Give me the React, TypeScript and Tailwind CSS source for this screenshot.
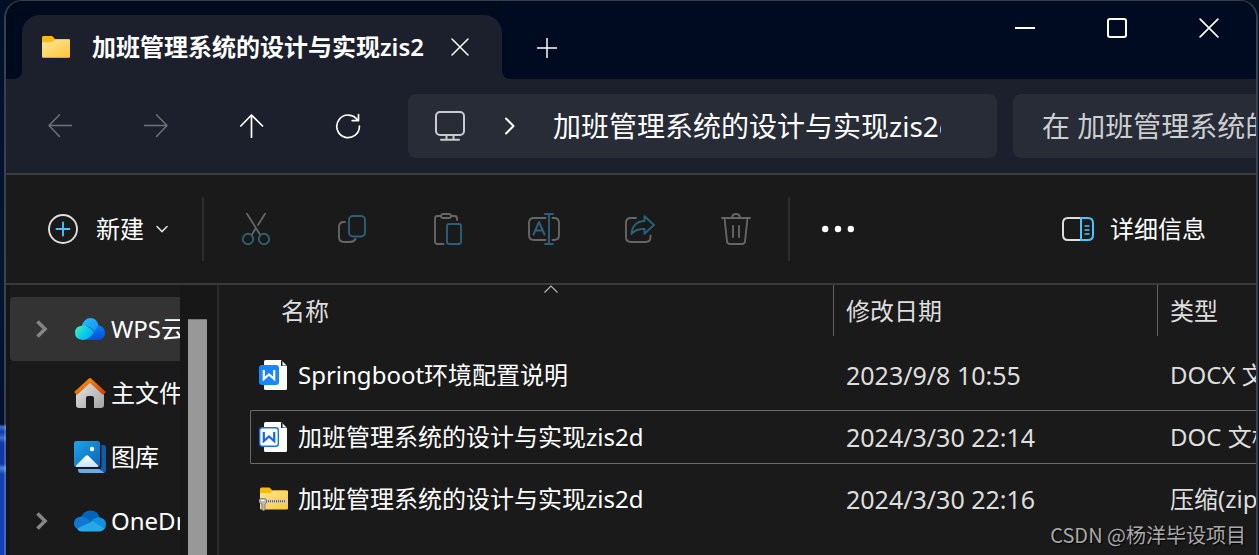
import React from 'react';

interface IconProps {
  className?: string;
}

interface FileItem {
  name: string;
  modified: string;
  type: string;
  icon: React.FC<IconProps>;
  focused?: boolean;
}

interface SidebarItem {
  title: string;
  icon: React.FC<IconProps>;
  expandable?: boolean;
  active?: boolean;
}

/* ---------- title bar and navigation icons ---------- */

const FolderIcon: React.FC<IconProps> = () => (
  <svg width="28" height="22" viewBox="0 0 28 22" fill="none" className="shrink-0">
    <defs>
      <linearGradient id="folder" x1="0" y1="0" x2="1" y2="1">
        <stop offset="0" stopColor="#ffe599" />
        <stop offset="1" stopColor="#ffc73a" />
      </linearGradient>
    </defs>
    <path d="M0 1.5Q0 0 1.5 0H9.5Q10.5 0 11.2 1L13 3H26.5Q28 3 28 4.500V21H0Z" fill="#fdb913" />
    <path d="M0 7Q0 6 1 6H10L13.500 3.500H27Q28 3.500 28 4.500V20.500Q28 22 26.500 22H1.500Q0 22 0 20.500Z" fill="#e8a21c" />
    <path d="M0 7Q0 6 1 6H10L13.500 3.500H27Q28 3.500 28 4.500V20Q28 21 27 21H1Q0 21 0 20Z" fill="url(#folder)" />
  </svg>
);

const CloseIcon = ({ size = 18 }: { size?: number }) => (
  <svg width={size} height={size} viewBox="0 0 18 18" stroke="currentColor" strokeWidth="1.5" strokeLinecap="round">
    <path d="M1 1L17 17M17 1L1 17" />
  </svg>
);

const PlusIcon = () => (
  <svg width="20" height="20" viewBox="0 0 20 20" stroke="currentColor" strokeWidth="1.5">
    <path d="M10 0V20M0 10H20" />
  </svg>
);

const BackIcon = () => (
  <svg width="24" height="24" viewBox="0 0 24 24" fill="none" stroke="currentColor" strokeWidth="1.6" strokeLinecap="round" strokeLinejoin="round">
    <path d="M23.500 11.500H1M11.500 .8L1 11.500L11.500 22.500" />
  </svg>
);

const ForwardIcon = () => (
  <svg width="24" height="24" viewBox="0 0 24 24" fill="none" stroke="currentColor" strokeWidth="1.6" strokeLinecap="round" strokeLinejoin="round">
    <path d="M.5 11.500H23M12.500 .8L23 11.500L12.500 22.500" />
  </svg>
);

const UpIcon = () => (
  <svg width="24" height="24" viewBox="0 0 24 24" fill="none" stroke="currentColor" strokeWidth="1.7" strokeLinecap="round" strokeLinejoin="round">
    <path d="M11.500 23.500V1M.8 12L11.500 1L22.500 12" />
  </svg>
);

const RefreshIcon = () => (
  <svg width="26" height="26" viewBox="0 0 26 26" fill="none" stroke="currentColor" strokeWidth="1.7" strokeLinecap="round" strokeLinejoin="round">
    <path d="M24.400 13A11.300 11.300 0 1 1 22.600 7.200M23.500 1.500V7.600H17.200" />
  </svg>
);

const MonitorIcon = () => (
  <svg width="30" height="30" viewBox="0 0 30 30" fill="none" stroke="#c9cbd0" strokeWidth="2">
    <rect x="1" y="1" width="28" height="23" rx="4" />
    <path d="M11.500 24.500V28M18.500 24.500V28" />
    <path d="M6 28.800H24" strokeLinecap="round" />
  </svg>
);

const CrumbIcon = () => (
  <svg width="10" height="18" viewBox="0 0 10 18" fill="none" stroke="currentColor" strokeWidth="2" strokeLinecap="round" strokeLinejoin="round">
    <path d="M1 1.500L8.500 9L1 16.500" />
  </svg>
);

/* ---------- command bar icons ---------- */

const CutIcon = () => (
  <svg width="28" height="32" viewBox="0 0 28 32" fill="none" strokeWidth="1.8" strokeLinecap="round">
    <path d="M5 .8L18 21.500M23 .8L16 12M13.600 15.500L10 21.500" stroke="#666" />
    <circle cx="6" cy="26" r="5.200" stroke="#2b5f7a" strokeWidth="1.9" />
    <circle cx="22" cy="26" r="5.200" stroke="#2b5f7a" strokeWidth="1.9" />
  </svg>
);

const CopyIcon = () => (
  <svg width="28" height="28" viewBox="0 0 28 28" fill="none" strokeWidth="1.9" strokeLinecap="round">
    <path d="M7 7H6Q1 7 1 12V22Q1 27 6 27H12Q16 27 17.500 24" stroke="#666" />
    <rect x="11" y="1" width="16" height="20.500" rx="4" stroke="#2b5f7a" strokeWidth="1.9" />
  </svg>
);

const PasteIcon = () => (
  <svg width="28" height="32" viewBox="0 0 28 32" fill="none" strokeWidth="1.9" strokeLinecap="round">
    <path d="M9.500 31H3.500Q1 31 1 28.500V5.500Q1 3 3.500 3H7M17 3H20.500Q23 3 23 5.500V7" stroke="#666" />
    <rect x="7" y="1" width="10" height="4" rx="2" stroke="#666" />
    <rect x="13" y="11" width="14" height="20" rx="2.200" stroke="#2b5f7a" strokeWidth="1.9" />
  </svg>
);

const RenameIcon = () => (
  <svg width="32" height="32" viewBox="0 0 32 32" fill="none" strokeWidth="1.9" strokeLinecap="round" strokeLinejoin="round">
    <path d="M17.500 5H6Q1 5 1 10V22Q1 27 6 27H17.500M24.500 5H26Q31 5 31 10V22Q31 27 26 27H24.500" stroke="#666" />
    <path d="M5.500 21.500L11 9L16.500 21.500M7.500 17.500H14.500" stroke="#2b5f7a" strokeWidth="2" />
    <path d="M21 1V31M17 1H25M17 31H25" stroke="#2b5f7a" strokeWidth="1.900" />
  </svg>
);

const ShareIcon = () => (
  <svg width="30" height="28" viewBox="0 0 30 28" fill="none" strokeWidth="1.9" strokeLinecap="round" strokeLinejoin="round">
    <path d="M11 3H6Q1 3 1 8V22Q1 27 6 27H20.500Q25.500 27 25.500 22V20.500" stroke="#666" />
    <path d="M19.500 1.200L29 10L19.500 18.800V14Q11 13.500 6.500 19Q7.500 6.500 19.500 6Z" stroke="#2b5f7a" />
  </svg>
);

const DeleteIcon = () => (
  <svg width="30" height="32" viewBox="0 0 30 32" fill="none" stroke="#666" strokeWidth="1.900" strokeLinecap="round" strokeLinejoin="round">
    <path d="M1 5H29M3.500 5L6 28.500Q6.300 31 8.800 31H21.200Q23.700 31 24 28.500L26.500 5M11 4.500Q11.500 1 15 1Q18.500 1 19 4.500M12 13V24M18 13V24" />
  </svg>
);

const NewIcon = () => (
  <svg width="30" height="30" viewBox="0 0 30 30" fill="none" strokeWidth="1.900">
    <circle cx="15" cy="15" r="14" stroke="#dedede" />
    <path d="M15 8.500V21.500M8.500 15H21.500" stroke="#4cc2ff" strokeLinecap="round" />
  </svg>
);

const DetailsIcon = () => (
  <svg width="32" height="24" viewBox="0 0 32 24" fill="none" strokeWidth="2">
    <path d="M19 1H6Q1 1 1 6V18Q1 23 6 23H19" stroke="#dedede" />
    <path d="M19 1H26Q31 1 31 6V18Q31 23 26 23H19Z" stroke="#4cc2ff" />
    <path d="M22.500 9H27.500M22.500 13H27.500M22.500 17H27.500" stroke="#4cc2ff" strokeWidth="1.700" />
  </svg>
);

/* ---------- sidebar icons ---------- */

const WpsCloudIcon: React.FC<IconProps> = () => (
  <svg width="32" height="24" viewBox="0 0 32 24" className="shrink-0">
    <defs>
      <linearGradient id="wpsLeft" x1="0" y1="0.200" x2="1" y2="0.800">
        <stop offset="0" stopColor="#45efb0" />
        <stop offset="0.550" stopColor="#08c8f0" />
        <stop offset="1" stopColor="#00a8ff" />
      </linearGradient>
      <linearGradient id="wpsTop" x1="0" y1="0" x2="1" y2="1">
        <stop offset="0" stopColor="#24c4f4" />
        <stop offset="1" stopColor="#168cf8" />
      </linearGradient>
      <linearGradient id="wpsRight" x1="0" y1="0" x2="0" y2="1">
        <stop offset="0" stopColor="#0880f4" />
        <stop offset="1" stopColor="#0450d8" />
      </linearGradient>
    </defs>
    <path d="M10 23Q15 22 20 15Q22 9 25 8.500Q31 10 31 16Q31 23 23.500 23Z" fill="url(#wpsRight)" />
    <path d="M7.500 9.500Q10 1 16.500 1Q22.500 1 24.500 8Q22 12 20 15Q17 9 10 9Z" fill="url(#wpsTop)" />
    <path d="M9 8.500Q15 8.500 20 15Q15 23 9 23Q1 22.500 1 15.800Q1 9 9 8.500Z" fill="url(#wpsLeft)" />
  </svg>
);

const HomeIcon: React.FC<IconProps> = () => (
  <svg width="32" height="30" viewBox="0 0 32 30" className="shrink-0">
    <defs>
      <linearGradient id="houseWall" x1="0" y1="0" x2="1" y2="1">
        <stop offset="0" stopColor="#e6e6e6" />
        <stop offset="1" stopColor="#a4a4a4" />
      </linearGradient>
      <linearGradient id="houseRoof" x1="0" y1="0" x2="1" y2="1">
        <stop offset="0" stopColor="#f99a0a" />
        <stop offset="1" stopColor="#d13f0c" />
      </linearGradient>
    </defs>
    <path d="M2 15L16 2L30 15V27Q30 30 27 30H20V20Q20 18 18 18H14Q12 18 12 20V30H5Q2 30 2 27Z" fill="url(#houseWall)" />
    <path d="M1.500 15.500L16 2.200L30.500 15.500" fill="none" stroke="url(#houseRoof)" strokeWidth="4" strokeLinejoin="round" />
  </svg>
);

const GalleryIcon: React.FC<IconProps> = () => (
  <svg width="32" height="32" viewBox="0 0 32 32" className="shrink-0">
    <defs>
      <linearGradient id="galleryFront" x1="0" y1="0" x2="1" y2="1">
        <stop offset="0" stopColor="#1fa4e8" />
        <stop offset="1" stopColor="#0b62b8" />
      </linearGradient>
      <linearGradient id="galleryHill" x1="0" y1="0" x2="0" y2="1">
        <stop offset="0" stopColor="#ffffff" />
        <stop offset="1" stopColor="#c8e2fa" />
      </linearGradient>
    </defs>
    <path d="M27.500 4H30Q32 4 32 6.500V29Q32 32 29 32H6Q4 32 4 28.500H24Q27.500 28.500 27.500 25Z" fill="#0c5fae" />
    <path d="M4 28H25L30 31.500Q29.500 32 29 32H7Q4 32 4 28Z" fill="#70a8e0" />
    <rect width="26" height="26" rx="2.500" fill="url(#galleryFront)" />
    <path d="M1.500 25L11.500 15Q13 13.500 14.500 15L24.500 25Q24 26 23 26H3Q2 26 1.500 25Z" fill="url(#galleryHill)" />
    <circle cx="18" cy="8" r="2.200" fill="#fff" />
  </svg>
);

const OneDriveIcon: React.FC<IconProps> = () => (
  <svg width="32" height="22" viewBox="0 0 32 22" className="shrink-0">
    <path d="M6.500 7.500Q10 .5 16.500 .5Q23.500 .5 25.800 7.500L17 12Z" fill="#0364b8" />
    <path d="M17 11.500L4 19Q0 17.500 0 13.500Q0 7 7.500 6.500Q11 6.500 17 11.500Z" fill="#0f78d4" />
    <path d="M17 11.500Q21 7 25.500 7.300Q32 8.500 32 14.500Q32 18 29.500 20Z" fill="#1490df" />
    <path d="M3 18.500L18.500 11L30 18.500Q29 21.500 25 21.500H7.500Q4.500 21.500 3 18.500Z" fill="#28a8ea" />
  </svg>
);

const ExpandIcon = () => (
  <svg width="12" height="18" viewBox="0 0 12 18" fill="none" stroke="#858585" strokeWidth="3.600">
    <path d="M1.500 1.500L9 9L1.500 16.500" />
  </svg>
);

/* ---------- file icons ---------- */

const DocxIcon: React.FC<IconProps> = () => (
  <svg width="29" height="30" viewBox="0 0 29 30" className="shrink-0">
    <path d="M6.500 0H22L28 6V28.500Q28 30 26.500 30H6.500Q5 30 5 28.500V1.500Q5 0 6.500 0Z" fill="#fff" />
    <path d="M22 0L28 6H22Z" fill="#1a1a1a" />
    <path d="M23.500 1.500V5.500H27.500Z" fill="#fff" />
    <rect y="5" width="20" height="20" rx="3" fill="#1a86fb" />
    <path d="M4.800 10V19L10 14.500L15.200 19V10" fill="none" stroke="#fff" strokeWidth="2.200" />
  </svg>
);

const DocIcon: React.FC<IconProps> = () => (
  <svg width="29" height="30" viewBox="0 0 29 30" className="shrink-0">
    <path d="M6.500 0H22L28 6V28.500Q28 30 26.500 30H6.500Q5 30 5 28.500V1.500Q5 0 6.500 0Z" fill="#fff" />
    <path d="M22 0L28 6H22Z" fill="#1a1a1a" />
    <path d="M23.500 1.500V5.500H27.500Z" fill="#fff" />
    <rect x="0.700" y="5.700" width="18.600" height="18.600" rx="2.500" fill="#fff" stroke="#1a70f0" strokeWidth="1.400" />
    <path d="M4.800 10V19L10 14.500L15.200 19V10" fill="none" stroke="#1268f0" strokeWidth="2.200" />
  </svg>
);

const ZipIcon: React.FC<IconProps> = () => (
  <svg width="29" height="24" viewBox="0 0 29 24" className="shrink-0">
    <path d="M1 2Q1 .5 2.500 .5H10.500L13.500 3.500H27.500Q29 3.500 29 5V12H1Z" fill="#fdb913" />
    <path d="M1 7Q1 6 2 6H11L14 3.500H28Q29 3.500 29 4.500V21.500Q29 22.500 28 22.500H2Q1 22.500 1 21.500Z" fill="url(#folder)" />
    <path d="M7 12.500H29V16H7Z" fill="#d8cfae" />
    <path d="M7 14.200H27" stroke="#66604a" strokeWidth="2" strokeDasharray="1 1" />
    <path d="M0 12.500L2 11.500H6L7.500 12.500V16L6 17V22Q6 23.500 4.500 23.500Q3 23.500 3 22V17L0 15.500Z" fill="#b9b9b9" stroke="#747474" strokeWidth=".8" />
    <path d="M2 13.500H5.500" stroke="#f2f2f2" strokeWidth="1.200" />
  </svg>
);

const commands = [
  { title: '剪切', icon: CutIcon },
  { title: '复制', icon: CopyIcon },
  { title: '粘贴', icon: PasteIcon },
  { title: '重命名', icon: RenameIcon },
  { title: '共享', icon: ShareIcon },
  { title: '删除', icon: DeleteIcon },
];

const sidebarItems: SidebarItem[] = [
  { title: 'WPS云盘', icon: WpsCloudIcon, expandable: true, active: true },
  { title: '主文件夹', icon: HomeIcon },
  { title: '图库', icon: GalleryIcon },
  { title: 'OneDrive', icon: OneDriveIcon, expandable: true },
];

const files: FileItem[] = [
  { name: 'Springboot环境配置说明', modified: '2023/9/8 10:55', type: 'DOCX 文档', icon: DocxIcon },
  { name: '加班管理系统的设计与实现zis2d', modified: '2024/3/30 22:14', type: 'DOC 文档', icon: DocIcon, focused: true },
  { name: '加班管理系统的设计与实现zis2d', modified: '2024/3/30 22:16', type: '压缩(zipped)文件夹', icon: ZipIcon },
];

const TitleBar = () => (
  <header className="flex h-[78px] bg-[#1b202c]">
    <div className="w-4 shrink-0 rounded-br-lg bg-[#000a1e]" />
    <div className="w-[480px] shrink-0 bg-[#000a1f] pt-[14px]">
      <div className="flex h-full items-center rounded-t-[18px] bg-[#1b202c] pl-5">
        <FolderIcon />
        <span className="ml-[22px] w-[332px] shrink-0 overflow-hidden text-2xl font-semibold leading-8 whitespace-nowrap">
          加班管理系统的设计与实现zis2
        </span>
        <button aria-label="关闭标签页" className="ml-4 flex h-10 w-10 items-center justify-center">
          <CloseIcon />
        </button>
      </div>
    </div>
    <div className="flex min-w-0 flex-1 justify-between rounded-bl-lg bg-[#000a20]">
      <button aria-label="添加新标签页" className="flex h-full w-[90px] items-center justify-center pt-4">
        <PlusIcon />
      </button>
      <div className="flex h-[54px] pr-px">
        <button aria-label="最小化" className="flex w-[92px] items-center justify-center">
          <span className="h-[2px] w-5 bg-white" />
        </button>
        <button aria-label="最大化" className="flex w-[92px] items-center justify-center">
          <span className="h-5 w-5 rounded-[3px] border-2 border-white" />
        </button>
        <button aria-label="关闭" className="flex w-[92px] items-center justify-center">
          <CloseIcon size={20} />
        </button>
      </div>
    </div>
  </header>
);

const NavBar = () => (
  <nav className="flex h-24 items-center border-b-2 border-[#3a3a3a] bg-[#1b202c] pl-[6px]">
    <button aria-label="后退" disabled className="flex h-16 w-24 items-center justify-center text-[#6b6f78]">
      <BackIcon />
    </button>
    <button aria-label="前进" disabled className="flex h-16 w-24 items-center justify-center text-[#6b6f78]">
      <ForwardIcon />
    </button>
    <button aria-label="向上" className="flex h-16 w-24 items-center justify-center">
      <UpIcon />
    </button>
    <button aria-label="刷新" className="flex h-16 w-24 items-center justify-center">
      <RefreshIcon />
    </button>
    <div className="ml-3 flex h-16 min-w-0 flex-1 items-center rounded-lg bg-[#272c37] pr-14 pl-[27px]">
      <MonitorIcon />
      <span className="mx-10 w-2 shrink-0">
        <CrumbIcon />
      </span>
      <a href="#folder" className="min-w-0 flex-1 overflow-hidden text-[28px] leading-10 whitespace-nowrap">
        加班管理系统的设计与实现zis2d
      </a>
    </div>
    <input
      type="text"
      aria-label="搜索"
      placeholder="在 加班管理系统的设计与实现zis2d 中搜索"
      className="ml-4 h-16 w-[243px] shrink-0 rounded-l-lg bg-[#272c37] pl-[29px] text-[28px] leading-10 outline-none placeholder:text-[#cdced1]"
    />
  </nav>
);

const CommandBar = () => (
  <div className="flex h-[110px] items-center border-b-2 border-[#3a3a3a] pr-[50px] pl-[42px]">
    <button className="flex items-center text-2xl leading-8">
      <NewIcon />
      <span className="ml-[18px]">新建</span>
      <svg width="12" height="8" viewBox="0 0 12 8" fill="none" stroke="#dedede" strokeWidth="1.600" strokeLinecap="round" className="ml-3">
        <path d="M1 1.500L6 6.500L11 1.500" />
      </svg>
    </button>
    <div className="ml-[34px] h-16 w-[2px] bg-[#2c2c2c]" />
    <div className="ml-1 flex">
      {commands.map((item) => (
        <button key={item.title} aria-label={item.title} disabled className="flex h-16 w-24 items-center justify-center">
          <item.icon />
        </button>
      ))}
    </div>
    <div className="ml-1 h-16 w-[2px] bg-[#2c2c2c]" />
    <button aria-label="查看更多" className="flex h-16 w-24 items-center justify-center">
      <svg width="32" height="8" viewBox="0 0 32 8" fill="#fff">
        <circle cx="3.200" cy="4" r="3.200" />
        <circle cx="16" cy="4" r="3.200" />
        <circle cx="28.800" cy="4" r="3.200" />
      </svg>
    </button>
    <button className="ml-auto flex items-center gap-4 text-2xl leading-8">
      <DetailsIcon />
      <span>详细信息</span>
    </button>
  </div>
);

const Sidebar = () => (
  <aside className="flex w-[211px] shrink-0 border-l-4 border-[#151515] bg-[#1a1a1a]">
    <ul className="w-[170px] shrink-0 overflow-hidden pt-3">
      {sidebarItems.map((item) => (
        <li key={item.title}>
          <a
            href="#"
            className={`flex h-16 items-center overflow-hidden text-2xl leading-8 whitespace-nowrap ${
              item.active ? 'rounded-l-sm bg-[#333333]' : ''
            }`}
          >
            <span className="flex w-16 shrink-0 pl-[26px]">{item.expandable && <ExpandIcon />}</span>
            <item.icon />
            <span className="ml-[5px]">{item.title}</span>
          </a>
        </li>
      ))}
    </ul>
    <div className="flex flex-1 bg-[#171717] pt-[34px] pl-2">
      <div className="w-[19px] border-t border-[#777777] bg-[#989898]" />
    </div>
  </aside>
);

const FileList = () => (
  <main className="min-w-0 flex-1 overflow-hidden border-l-2 border-[#2b2b2b] pl-[31px]">
    <table className="w-full table-fixed text-left text-2xl leading-8 whitespace-nowrap">
      <thead className="text-[#dedede]">
        <tr className="h-[59px] align-top">
          <th className="p-0 font-normal">
            <div className="relative h-[51px] border-r border-[#636363] pt-[10px] pl-[31px]">
              名称
              <svg width="14" height="8" viewBox="0 0 14 8" fill="none" stroke="#b5b5b5" strokeWidth="1.200" className="absolute top-0 left-[294px]">
                <path d="M.5 7.500L7 1L13.500 7.500" />
              </svg>
            </div>
          </th>
          <th className="w-[324px] p-0 font-normal">
            <div className="h-[51px] border-r border-[#636363] pt-[10px] pl-3">修改日期</div>
          </th>
          <th className="w-[98px] p-0 font-normal">
            <div className="pt-[10px] pl-3">类型</div>
          </th>
        </tr>
      </thead>
      <tbody>
        {files.map((file) => {
          const line = file.focused ? 'border-[#6b6b6b]' : 'border-transparent';
          return (
            <tr key={file.modified} className="h-[62px]">
              <td className="p-0">
                <div className={`flex h-[54px] items-center gap-[10px] rounded-l-xs border-y border-l pl-2 ${line}`}>
                  <file.icon />
                  {file.name}
                </div>
              </td>
              <td className="p-0 text-[25px] text-[#dedede]">
                <div className={`flex h-[54px] items-center border-y pl-3 ${line}`}>{file.modified}</div>
              </td>
              <td className="p-0 text-[#dedede]">
                <div className={`flex h-[54px] items-center overflow-hidden border-y pl-3 ${line}`}>{file.type}</div>
              </td>
            </tr>
          );
        })}
      </tbody>
    </table>
  </main>
);

const App: React.FC = () => {
  return (
    <div
      lang="zh-CN"
      className="relative flex min-h-screen bg-[#04101f] bg-[linear-gradient(#020f28_0px,#06142e_290px,#04102c_424px,#3d6fc8_427px,#1238a8_432px,#3c70cc_438px,#1236a4_443px,#1238ac_464px,#4a86d4_468px,#1440b4_474px,#1440b8_555px)] bg-[length:6px_100%] bg-no-repeat pr-px pl-1 font-['Noto_Sans','Noto_Sans_CJK_SC',sans-serif] text-white"
    >
      <div className="flex min-w-0 flex-1 flex-col overflow-hidden rounded-t-[18px] border-x-2 border-t border-white/20 bg-[#1a1a1a] bg-clip-padding">
        <TitleBar />
        <NavBar />
        <CommandBar />
        <div className="flex flex-1">
          <Sidebar />
          <FileList />
        </div>
      </div>
      <p className="absolute right-[13px] bottom-[6px] font-['Noto_Sans_CJK_SC',sans-serif] text-xl leading-7 text-[#a9a9a9] [text-shadow:1px_1px_1px_#000]">
        CSDN @杨洋毕设项目
      </p>
    </div>
  );
};

export default App;
